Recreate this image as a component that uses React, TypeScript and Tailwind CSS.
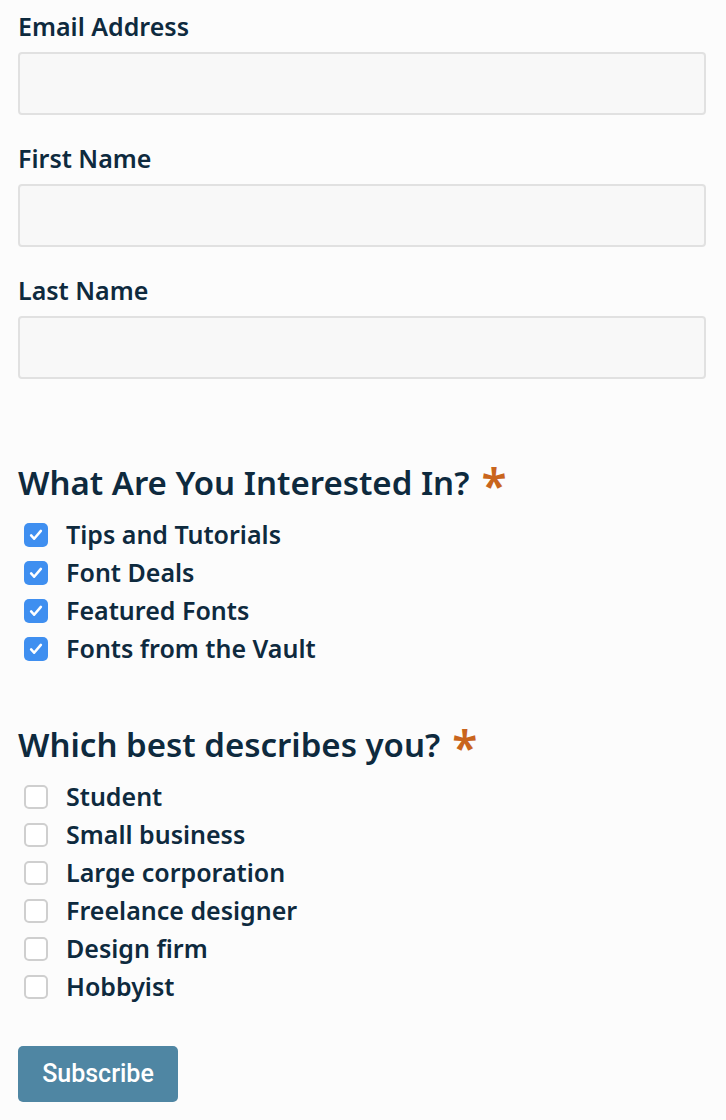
import React from 'react';

const fields = ['Email Address', 'First Name', 'Last Name'];
const interests = ['Tips and Tutorials', 'Font Deals', 'Featured Fonts', 'Fonts from the Vault'];
const roles = ['Student', 'Small business', 'Large corporation', 'Freelance designer', 'Design firm', 'Hobbyist'];

const Box: React.FC<{ checked: boolean }> = ({ checked }) =>
  checked ? (
    <span className="flex h-6 w-6 shrink-0 items-center justify-center rounded-[5px] bg-[#3f8ff0]">
      <svg viewBox="0 0 24 24" className="h-[18px] w-[18px]" fill="none" stroke="white" strokeWidth="3.4" strokeLinecap="round" strokeLinejoin="round">
        <path d="M5.5 12.5l4 4.5L18.5 6.5" />
      </svg>
    </span>
  ) : (
    <span className="h-6 w-6 shrink-0 rounded-[5px] border-2 border-[#cfcfcf] bg-white" />
  );

const Group: React.FC<{ title: string; items: string[]; checked: boolean; className?: string }> = ({ title, items, checked, className }) => (
  <div className={className}>
    <h2 className="flex items-start text-[33px] font-semibold leading-10">
      {title}
      <span className="ml-3 text-[46px] leading-[44px] text-[#c9651d]">*</span>
    </h2>
    <ul className="mt-[9px] flex flex-col">
      {items.map((it) => (
        <li key={it} className="flex h-[38px] items-center gap-[18px] pl-[6px] text-[25px] font-semibold">
          <Box checked={checked} />
          {it}
        </li>
      ))}
    </ul>
  </div>
);

export default function App() {
  return (
    <div className="min-h-[1120px] bg-[#fcfcfc] pl-[18px] pr-[20px] pt-[10px] text-[#0e2a3e]" style={{ fontFamily: '"Noto Sans", sans-serif' }}>
      {fields.map((f) => (
        <div key={f} className="mb-[27px]">
          <label className="block text-[25px] font-semibold leading-8">{f}</label>
          <div className="mt-[10px] h-[63px] w-full rounded-[4px] border-2 border-[#e1e1e1] bg-[#f8f8f8]" />
        </div>
      ))}
      <Group title="What Are You Interested In?" items={interests} checked className="mt-[84px]" />
      <Group title="Which best describes you?" items={roles} checked={false} className="mt-[57px]" />
      <button
        className="mt-[40px] h-[56px] w-[160px] rounded-[5px] bg-[#4f86a3] text-[25px] font-medium text-white"
        style={{ fontFamily: 'Roboto, sans-serif' }}
      >
        Subscribe
      </button>
    </div>
  );
}
